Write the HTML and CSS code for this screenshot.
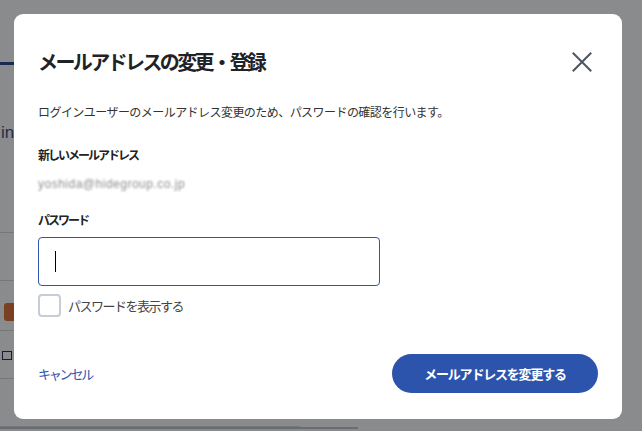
FILE: index.html
```html
<!DOCTYPE html>
<html lang="ja">
<head>
<meta charset="utf-8">
<title>メールアドレスの変更・登録</title>
<link rel="stylesheet" href="styles.css">
</head>
<body>
<div class="page">
  <div class="page-header"></div>
  <div class="page-row page-row--title"><span class="page-word">in</span></div>
  <div class="page-row page-row--b"></div>
  <div class="page-row page-row--c"><span class="page-badge"></span></div>
  <div class="page-row page-row--d"><span class="page-box"></span></div>
  <div class="page-row page-row--e"></div>
  <div class="page-footer"></div>
</div>

<div class="overlay">
  <div class="modal" role="dialog" aria-labelledby="modal-title">
    <div class="modal-header">
      <h1 id="modal-title" class="modal-title">メールアドレスの変更・登録</h1>
      <button class="modal-close" type="button" aria-label="閉じる">
        <svg width="20" height="20" viewBox="0 0 20 20" fill="none" stroke="#4b5563" stroke-width="2" stroke-linecap="square">
          <path d="M1.5 1.5 L18.5 18.5 M18.5 1.5 L1.5 18.5"/>
        </svg>
      </button>
    </div>
    <p class="modal-desc">ログインユーザーのメールアドレス変更のため、パスワードの確認を行います。</p>
    <div class="field">
      <div class="field-label">新しいメールアドレス</div>
      <div class="field-value">yoshida@hidegroup.co.jp</div>
    </div>
    <div class="field field--password">
      <div class="field-label">パスワード</div>
      <div class="input"><span class="caret"></span></div>
      <label class="check">
        <span class="check-box"></span>
        <span class="check-text">パスワードを表示する</span>
      </label>
    </div>
    <div class="modal-footer">
      <a class="cancel" href="#">キャンセル</a>
      <button class="primary" type="button">メールアドレスを変更する</button>
    </div>
  </div>
</div>
</body>
</html>
```

FILE: styles.css
```css
* { box-sizing: border-box; }

html, body {
  margin: 0;
  padding: 0;
  width: 642px;
  height: 431px;
  overflow: hidden;
}

body {
  font-family: "Noto Sans CJK JP", "Noto Sans", sans-serif;
  background: #ffffff;
  color: #222;
}

/* background page (mostly hidden by the modal) */
.page {
  width: 642px;
  height: 431px;
  background: #fff;
}
.page-header {
  width: 300px;
  height: 65px;
  border-bottom: 3px solid #1e3a8a;
}
.page-row {
  width: 300px;
  border-bottom: 1px solid #d5d8dc;
}
.page-row--title {
  height: 168px;
  padding-top: 58px;
}
.page-word {
  display: block;
  padding-left: 1px;
  font-family: "Liberation Sans", sans-serif;
  font-size: 17px;
  color: #3a3f78;
  line-height: 20px;
}
.page-row--b { height: 48px; }
.page-row--c {
  height: 50px;
  padding-top: 22px;
}
.page-badge {
  display: block;
  width: 12px;
  height: 18px;
  margin-left: 4px;
  background: #e0692a;
  border-radius: 3px;
}
.page-row--d {
  height: 48px;
  padding-top: 20px;
}
.page-box {
  display: block;
  width: 10px;
  height: 9px;
  margin-left: 2px;
  border: 1px solid #1a1f5c;
}
.page-row--e { height: 48px; }
.page-footer {
  width: 358px;
  height: 2px;
  background: #bfc3c8;
}

/* overlay */
.overlay {
  position: fixed;
  inset: 0;
  background: rgba(20, 24, 28, 0.5);
  padding: 14px 20px 12px 14px;
}

.modal {
  width: 608px;
  height: 405px;
  background: #fff;
  border-radius: 9px;
  padding: 0 24px;
  display: flex;
  flex-direction: column;
}

.modal-header {
  display: flex;
  align-items: center;
  justify-content: space-between;
  padding-top: 34px;
  height: 62px;
}
.modal-title {
  margin: 0;
  font-size: 20px;
  line-height: 28px;
  font-weight: 700;
  color: #1f2328;
  letter-spacing: -2.6px;
}
.modal-close {
  width: 24px;
  height: 24px;
  padding: 2px;
  margin-right: 4px;
  border: 0;
  background: transparent;
  display: flex;
  align-items: center;
  justify-content: center;
}

.modal-desc {
  margin: 27px 0 0;
  font-size: 12px;
  line-height: 18px;
  color: #333;
  letter-spacing: -0.55px;
}

.field { margin-top: 25px; }
.field-label {
  font-size: 12px;
  line-height: 18px;
  font-weight: 700;
  color: #222;
  letter-spacing: -2px;
}
.field-value {
  margin-top: 11px;
  font-family: "Liberation Sans", sans-serif;
  font-size: 12px;
  line-height: 18px;
  color: #8e8e8e;
  filter: blur(1.2px);
  letter-spacing: 0.5px;
}

.field--password { margin-top: 18px; }
.input {
  margin-top: 8px;
  width: 342px;
  height: 49px;
  border: 1px solid #2f55b0;
  border-radius: 4px;
  padding: 13px 16px;
}
.caret {
  display: block;
  width: 1px;
  height: 21px;
  background: #000;
}

.check {
  margin-top: 8px;
  display: flex;
  align-items: center;
  gap: 7px;
}
.check-box {
  width: 23px;
  height: 23px;
  border: 2px solid #c6cdd6;
  border-radius: 4px;
}
.check-text {
  font-size: 13px;
  line-height: 18px;
  color: #444;
  letter-spacing: -1.5px;
}

.modal-footer {
  margin-top: 37px;
  display: flex;
  align-items: center;
  justify-content: space-between;
}
.cancel {
  font-size: 13px;
  line-height: 18px;
  color: #2f55b0;
  text-decoration: none;
  letter-spacing: -2.2px;
}
.primary {
  width: 206px;
  height: 39px;
  border: 0;
  border-radius: 20px;
  background: #2d54ac;
  color: #fff;
  font-family: "Noto Sans CJK JP", sans-serif;
  font-size: 13px;
  font-weight: 700;
  letter-spacing: -1.2px;
}
```
